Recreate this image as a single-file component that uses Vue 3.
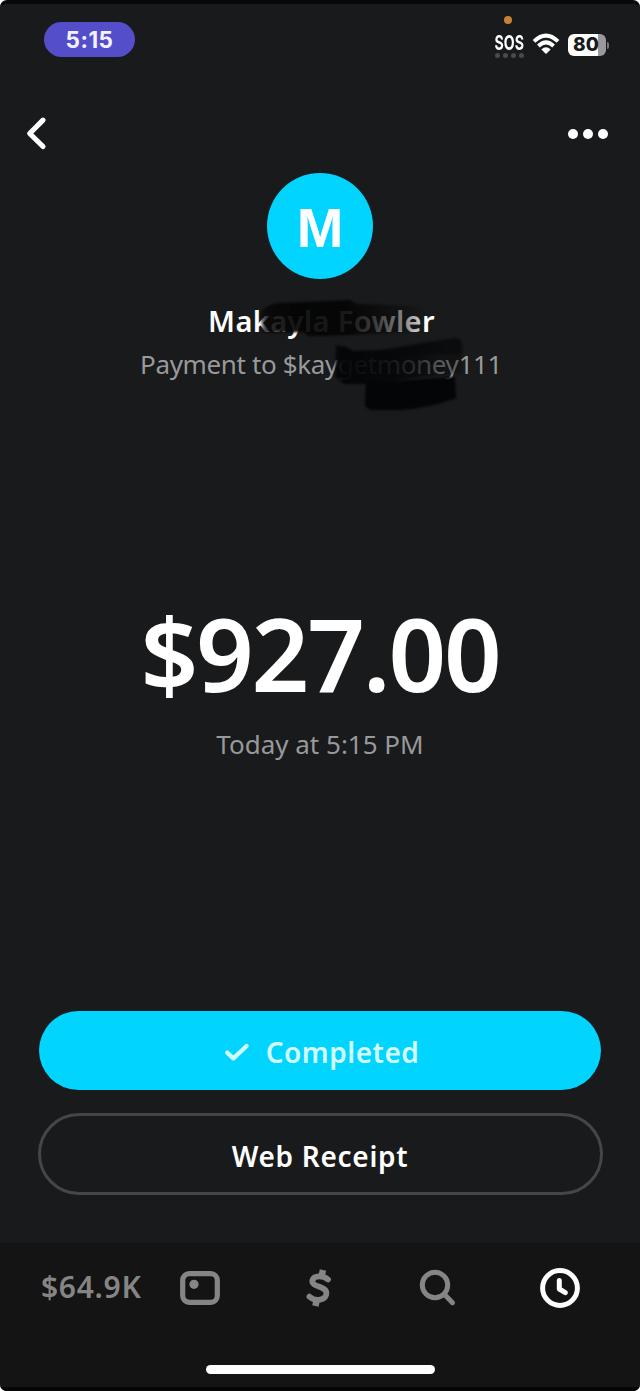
<script setup>
const payment = {
  initial: 'M',
  name: 'Makayla Fowler',
  detail: 'Payment to $kaygetmoney111',
  amount: '$927.00',
  date: 'Today at 5:15 PM',
}
</script>

<template>
  <div class="backdrop">
    <main class="screen">
      <header class="status">
        <span class="time">5:15</span>
        <div class="indicators">
          <div class="sos">
            <i class="privacy"></i>
            <span class="sos-text">SOS</span>
            <span class="signal"><i></i><i></i><i></i><i></i></span>
          </div>
          <svg class="wifi" width="28" height="22" viewBox="0 0 28 22">
            <g fill="none" stroke="#fff" stroke-width="3.9">
              <path d="M2 8.4Q14-3.2 26 8.4" />
              <path d="M6.4 13Q14 5.8 21.6 13" />
            </g>
            <path d="M9.3 16.4Q14 12.3 18.7 16.4L14 21Z" fill="#fff" />
          </svg>
          <div class="battery"><span>80</span><i></i></div>
        </div>
      </header>

      <nav class="topbar">
        <svg width="24" height="36" viewBox="0 0 24 36">
          <path d="M20 5.2 6.7 18.5 20 31.5" fill="none" stroke="#fff" stroke-width="5.2" stroke-linecap="round" stroke-linejoin="round" />
        </svg>
        <span class="more"><i></i><i></i><i></i></span>
      </nav>

      <section class="recipient">
        <div class="avatar">{{ payment.initial }}</div>
        <h1>{{ payment.name }}</h1>
        <p class="detail">{{ payment.detail }}</p>
        <svg class="marker" width="210" height="116" viewBox="258 298 210 116">
          <defs>
            <linearGradient id="fadeTop" gradientUnits="userSpaceOnUse" x1="258" y1="0" x2="424" y2="0">
              <stop offset="0" stop-color="#070707" stop-opacity=".4" />
              <stop offset=".06" stop-color="#070707" stop-opacity=".86" />
              <stop offset=".2" stop-color="#050505" stop-opacity=".93" />
              <stop offset=".55" stop-color="#050505" stop-opacity=".92" />
              <stop offset=".72" stop-color="#0a0a0a" stop-opacity=".78" />
              <stop offset=".88" stop-color="#0c0c0c" stop-opacity=".5" />
              <stop offset="1" stop-color="#101010" stop-opacity=".15" />
            </linearGradient>
            <linearGradient id="fadeMid" gradientUnits="userSpaceOnUse" x1="334" y1="0" x2="464" y2="0">
              <stop offset="0" stop-color="#040506" stop-opacity=".8" />
              <stop offset=".08" stop-color="#040506" stop-opacity=".96" />
              <stop offset=".45" stop-color="#050607" stop-opacity=".88" />
              <stop offset=".65" stop-color="#060708" stop-opacity=".72" />
              <stop offset=".8" stop-color="#070809" stop-opacity=".45" />
              <stop offset="1" stop-color="#08090a" stop-opacity=".35" />
            </linearGradient>
            <filter id="soft" color-interpolation-filters="sRGB"><feGaussianBlur stdDeviation="1.1" /></filter>
          </defs>
          <g filter="url(#soft)">
            <path d="M260 314Q266 303 282 303L350 300 357 304 418 306 424 314 420 332 370 334 325 336 308 336 304 332 263 333Z" fill="url(#fadeTop)" />
            <path d="M336 345 346 347 353 351 382 350 455 338Q461 338 462 345L462 373 424 377 368 384 344 384 335 376Z" fill="url(#fadeMid)" />
            <path d="M382 350 455 338Q461 338 462 345L462 354 382 355Z" fill="#07080a" fill-opacity=".6" />
            <path d="M366 383 455 377 456 398Q430 408 400 410L371 410 365 406Z" fill="#040506" />
          </g>
        </svg>
      </section>

      <section class="sum">
        <div class="amount">{{ payment.amount }}</div>
        <div class="date">{{ payment.date }}</div>
      </section>

      <section class="actions">
        <button class="btn done">
          <svg width="26" height="20" viewBox="0 0 26 20">
            <path d="M3.2 10.6 9.4 16.4 22.6 4" fill="none" stroke="#d2fcff" stroke-width="4.2" stroke-linecap="round" stroke-linejoin="round" />
          </svg>
          <span>Completed</span>
        </button>
        <button class="btn receipt">Web Receipt</button>
      </section>

      <footer class="tabs">
        <div class="tabrow">
          <span class="balance">$64.9K</span>
          <svg class="card" width="40" height="34" viewBox="0 0 40 34">
            <rect x="2.7" y="2.7" width="34.6" height="28.6" rx="6.5" fill="none" stroke="#858585" stroke-width="5.2" />
            <circle cx="14" cy="13.3" r="4.6" fill="#858585" />
          </svg>
          <svg class="cash" width="26" height="38" viewBox="0 0 26 38">
            <g fill="none" stroke="#858585" stroke-width="5.8">
              <path d="M22 10.4C17.5 6.8 8 5.6 6.4 11.4 4.8 18.4 20.2 16.6 20.4 24 20.5 31.4 9.5 33 3.4 27.6" stroke-linecap="round" />
              <path d="M17 1 15.4 8M11 30 9.4 37" stroke-width="6.5" />
            </g>
          </svg>
          <svg class="search" width="38" height="38" viewBox="0 0 38 38">
            <g fill="none" stroke="#858585" stroke-width="5" stroke-linecap="round">
              <circle cx="16" cy="16" r="12.7" />
              <path d="m25.3 25.3 8.2 8.4" />
            </g>
          </svg>
          <svg class="clock" width="42" height="42" viewBox="0 0 42 42">
            <g fill="none" stroke="#fff" stroke-width="5" stroke-linecap="round" stroke-linejoin="round">
              <circle cx="21" cy="21" r="17.4" />
              <path d="M20.3 13.5V22L26.3 25.6" />
            </g>
          </svg>
        </div>
        <div class="home"></div>
      </footer>
    </main>
  </div>
</template>

<style>
body {
  margin: 0;
  background: #fff;
}
</style>

<style scoped>
* {
  box-sizing: border-box;
}
.backdrop {
  background: #fff;
  font-family: 'Noto Sans', 'Open Sans', sans-serif;
}
.screen {
  display: flex;
  flex-direction: column;
  width: 640px;
  height: 1391px;
  background: #191a1b;
  border-top: 4px solid #070808;
  border-radius: 7px;
  overflow: hidden;
  color: #fff;
}
.status {
  height: 86px;
  flex: none;
  display: flex;
  justify-content: space-between;
  align-items: flex-start;
  padding: 12px 31px 0 44px;
}
.time {
  width: 91px;
  height: 35px;
  margin-top: 6px;
  border-radius: 18px;
  background: #554ecb;
  font: 700 22.5px/36px Inter, sans-serif;
  letter-spacing: 0.5px;
  text-align: center;
  color: #f3f2ff;
}
.indicators {
  display: flex;
}
.sos {
  width: 32px;
  display: flex;
  flex-direction: column;
  align-items: center;
}
.privacy {
  width: 8px;
  height: 8px;
  margin-right: 2px;
  border-radius: 50%;
  background: #c78335;
}
.sos-text {
  height: 20px;
  margin-top: 9px;
  font: 700 20.5px/20px Inter, sans-serif;
  transform: scaleX(0.69);
}
.signal {
  display: flex;
  gap: 3px;
  margin-top: 0;
}
.signal i {
  width: 5px;
  height: 5px;
  border-radius: 50%;
  background: #494a4b;
}
.wifi {
  margin: 17px 0 0 7px;
}
.battery {
  display: flex;
  align-items: center;
  margin: 18px 0 0 8px;
  height: 22px;
}
.battery span {
  width: 38px;
  height: 22px;
  padding-right: 2px;
  border-radius: 6px;
  background: linear-gradient(90deg, #fff 79%, #999 79%);
  color: #191a1b;
  font: 800 19px/22px Inter, sans-serif;
  text-align: center;
}
.battery i {
  width: 2px;
  height: 7px;
  margin-left: 1px;
  border-radius: 0 2px 2px 0;
  background: #777;
}
.topbar {
  height: 83px;
  flex: none;
  display: flex;
  justify-content: space-between;
  align-items: flex-start;
  padding: 25px 32px 0 23px;
}
.more {
  display: flex;
  gap: 5px;
  margin-top: 14px;
}
.more i {
  width: 10px;
  height: 10px;
  border-radius: 50%;
  background: #fff;
}
.recipient {
  position: relative;
  height: 427px;
  flex: none;
  display: flex;
  flex-direction: column;
  align-items: center;
}
.avatar {
  width: 106px;
  height: 106px;
  border-radius: 50%;
  background: #00d4ff;
  font: 700 56px/110px 'Liberation Sans', sans-serif;
  text-align: center;
}
h1 {
  margin: 22px 0 0 3px;
  font-size: 29px;
  line-height: 40px;
  font-weight: 600;
  letter-spacing: 0.4px;
  white-space: nowrap;
}
.detail {
  margin: 4px 0 0 2px;
  font-size: 26px;
  line-height: 38px;
  letter-spacing: -0.37px;
  color: #98999b;
  white-space: nowrap;
}
.marker {
  position: absolute;
  left: 258px;
  top: 125px;
}
.sum {
  height: 411px;
  flex: none;
  text-align: center;
}
.amount {
  height: 107px;
  font-size: 101px;
  line-height: 107px;
  font-weight: 650;
  letter-spacing: -2.2px;
}
.date {
  margin-top: 19px;
  font-size: 26px;
  line-height: 36px;
  color: #98999b;
}
.actions {
  flex: none;
  height: 232px;
  display: flex;
  flex-direction: column;
  align-items: center;
  gap: 23px;
}
.btn {
  flex: none;
  display: flex;
  align-items: center;
  justify-content: center;
  padding: 0;
  border: 0;
  font-family: inherit;
  font-weight: 600;
  font-size: 28px;
}
.done {
  width: 562px;
  height: 79px;
  border-radius: 40px;
  background: #00d4ff;
  color: #d2fcff;
  gap: 16px;
  padding: 2px 0 0 3px;
  letter-spacing: 0.5px;
}
.receipt {
  width: 565px;
  height: 82px;
  border: 3px solid #454647;
  border-radius: 41px;
  background: transparent;
  color: #fff;
  padding-top: 3px;
  letter-spacing: 0.7px;
}
.tabs {
  flex: 1;
  background: #141414;
  border-bottom: 4px solid #050505;
}
.tabrow {
  height: 90px;
  display: flex;
  align-items: center;
  padding-left: 41px;
}
.balance {
  width: 139px;
  font-size: 30px;
  line-height: 40px;
  font-weight: 600;
  letter-spacing: 0.7px;
  padding-bottom: 2px;
  color: #858585;
}
.cash {
  margin-left: 86px;
}
.search {
  margin-left: 87px;
}
.clock {
  margin-left: 82px;
}
.home {
  width: 229px;
  height: 9px;
  margin: 32px auto 0;
  border-radius: 5px;
  background: #fff;
}
</style>
